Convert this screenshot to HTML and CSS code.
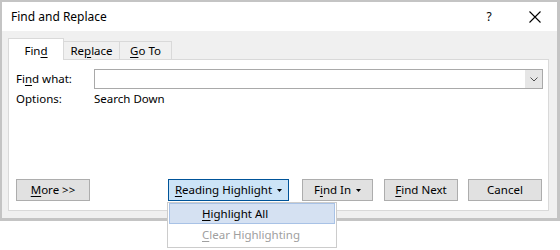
FILE: index.html
```html
<!DOCTYPE html>
<html>
<head>
<meta charset="utf-8">
<title>Find and Replace</title>
<link rel="stylesheet" href="styles.css">
</head>
<body>
<div class="window">
  <div class="titlebar">
    <span class="title">Find and Replace</span>
    <span class="help">?</span>
    <span class="close"><svg width="12" height="12" viewBox="0 0 12 12"><path d="M0.5 0.5L11.5 11.5M11.5 0.5L0.5 11.5" stroke="#000" stroke-width="1.1" fill="none"/></svg></span>
  </div>
  <div class="body">
    <div class="tabs">
      <div class="tab tab-find active">Fin<u>d</u></div>
      <div class="tab tab-replace">Re<u>p</u>lace</div>
      <div class="tab tab-goto"><u>G</u>o To</div>
    </div>
    <div class="panel">
      <div class="field">
        <span class="label">Fi<u>n</u>d what:</span>
        <div class="combo">
          <div class="combo-input"></div>
          <div class="combo-btn"><svg width="8" height="5" viewBox="0 0 8 5"><path d="M0.5 0.5L4 4L7.5 0.5" stroke="#505050" stroke-width="1" fill="none"/></svg></div>
        </div>
      </div>
      <div class="field options">
        <span class="label">Options:</span>
        <span class="value">Search Down</span>
      </div>
      <div class="buttons">
        <button class="btn btn-more"><u>M</u>ore &gt;&gt;</button>
        <div class="btn-group">
          <div class="menu-wrap">
            <button class="btn btn-pressed btn-reading"><u>R</u>eading Highlight<svg class="caret" width="5" height="3" viewBox="0 0 5 3"><path d="M0 0H5L2.5 3Z" fill="#000"/></svg></button>
            <div class="menu">
              <div class="menu-item hover"><u>H</u>ighlight All</div>
              <div class="menu-item disabled"><u>C</u>lear Highlighting</div>
            </div>
          </div>
          <button class="btn btn-findin">F<u>i</u>nd In<svg class="caret" width="5" height="3" viewBox="0 0 5 3"><path d="M0 0H5L2.5 3Z" fill="#000"/></svg></button>
          <button class="btn btn-findnext"><u>F</u>ind Next</button>
          <button class="btn btn-cancel">Cancel</button>
        </div>
      </div>
    </div>
  </div>
</div>
</body>
</html>
```

FILE: styles.css
```css
* { box-sizing: border-box; }
html, body { margin: 0; padding: 0; background: #fff; }
body {
  width: 560px;
  height: 250px;
  overflow: hidden;
  font-family: "Noto Sans", "Liberation Sans", sans-serif;
  font-size: 11.5px;
  line-height: 16px;
  color: #000;
}
u { text-decoration-thickness: 1px; text-underline-offset: 2px; }

.window {
  width: 560px;
  height: 221px;
  border: 2px solid #c4c4c4;
  border-right-width: 3px;
  border-bottom-width: 3px;
  background: #f0f0f0;
  display: flex;
  flex-direction: column;
}

.titlebar {
  flex: none;
  height: 29px;
  background: #fff;
  display: flex;
  align-items: center;
  padding-left: 9px;
}
.title { flex: 1; font-size: 12px; }
.help { width: 12px; text-align: center; margin-right: 34px; font-size: 12px; }
.close { width: 12px; height: 12px; margin-right: 16px; display: flex; }

.body {
  flex: 1;
  display: flex;
  flex-direction: column;
  padding: 7px 8px 7px 6px;
}

.tabs {
  flex: none;
  height: 21px;
  display: flex;
  align-items: flex-end;
}
.tab {
  height: 18px;
  border: 1px solid #d9d9d9;
  border-bottom: none;
  background: #f0f0f0;
  display: flex;
  justify-content: center;
  padding-top: 1px;
  margin-left: -1px;
}
.tab-find { width: 56px; margin-left: 0; }
.tab-replace { width: 57px; }
.tab-goto { width: 53px; }
.tab.active {
  height: 22px;
  background: #fff;
  margin-bottom: -1px;
  padding-top: 4px;
  position: relative;
  z-index: 1;
}

.panel {
  flex: 1;
  background: #fff;
  border: 1px solid #d9d9d9;
  padding: 9px 5px 9px 7px;
  display: flex;
  flex-direction: column;
}

.field {
  display: flex;
  align-items: center;
  height: 20px;
}
.label { width: 78px; flex: none; }
.options { margin-top: 2px; height: 16px; }

.combo {
  flex: 1;
  height: 20px;
  border: 1px solid #a9a9a9;
  display: flex;
  background: #fff;
}
.combo-input { flex: 1; }
.combo-btn {
  width: 17px;
  background: #e6e6e6;
  display: flex;
  align-items: center;
  justify-content: center;
}

.buttons {
  margin-top: auto;
  display: flex;
  height: 22px;
  padding-right: 1px;
}
.btn {
  height: 22px;
  border: 1px solid #adadad;
  background: #e1e1e1;
  font: inherit;
  color: #000;
  padding: 0;
  display: flex;
  align-items: center;
  justify-content: center;
}
.caret { margin-left: 5px; }
.btn-more { width: 74px; }
.btn-group { margin-left: auto; display: flex; }
.menu-wrap { position: relative; }
.btn-reading { width: 121px; }
.btn-pressed { background: #cce4f7; border-color: #005499; }
.btn-findin { width: 71px; margin-left: 13px; }
.btn-findnext { width: 74px; margin-left: 11px; }
.btn-cancel { width: 74px; margin-left: 10px; }

.menu {
  position: absolute;
  top: calc(100% + 1px);
  left: -1px;
  width: 170px;
  background: #fff;
  border: 1px solid #cccccc;
  padding: 0 1px 1px;
  z-index: 5;
}
.menu-item {
  height: 22px;
  display: flex;
  align-items: center;
  padding-left: 33px;
}
.menu-item.hover {
  height: 21px;
  background: #d5e1f2;
  border: 1px solid #a8c2e6;
  padding-left: 32px;
}
.menu-item.disabled { color: #a0a0a0; }
```
